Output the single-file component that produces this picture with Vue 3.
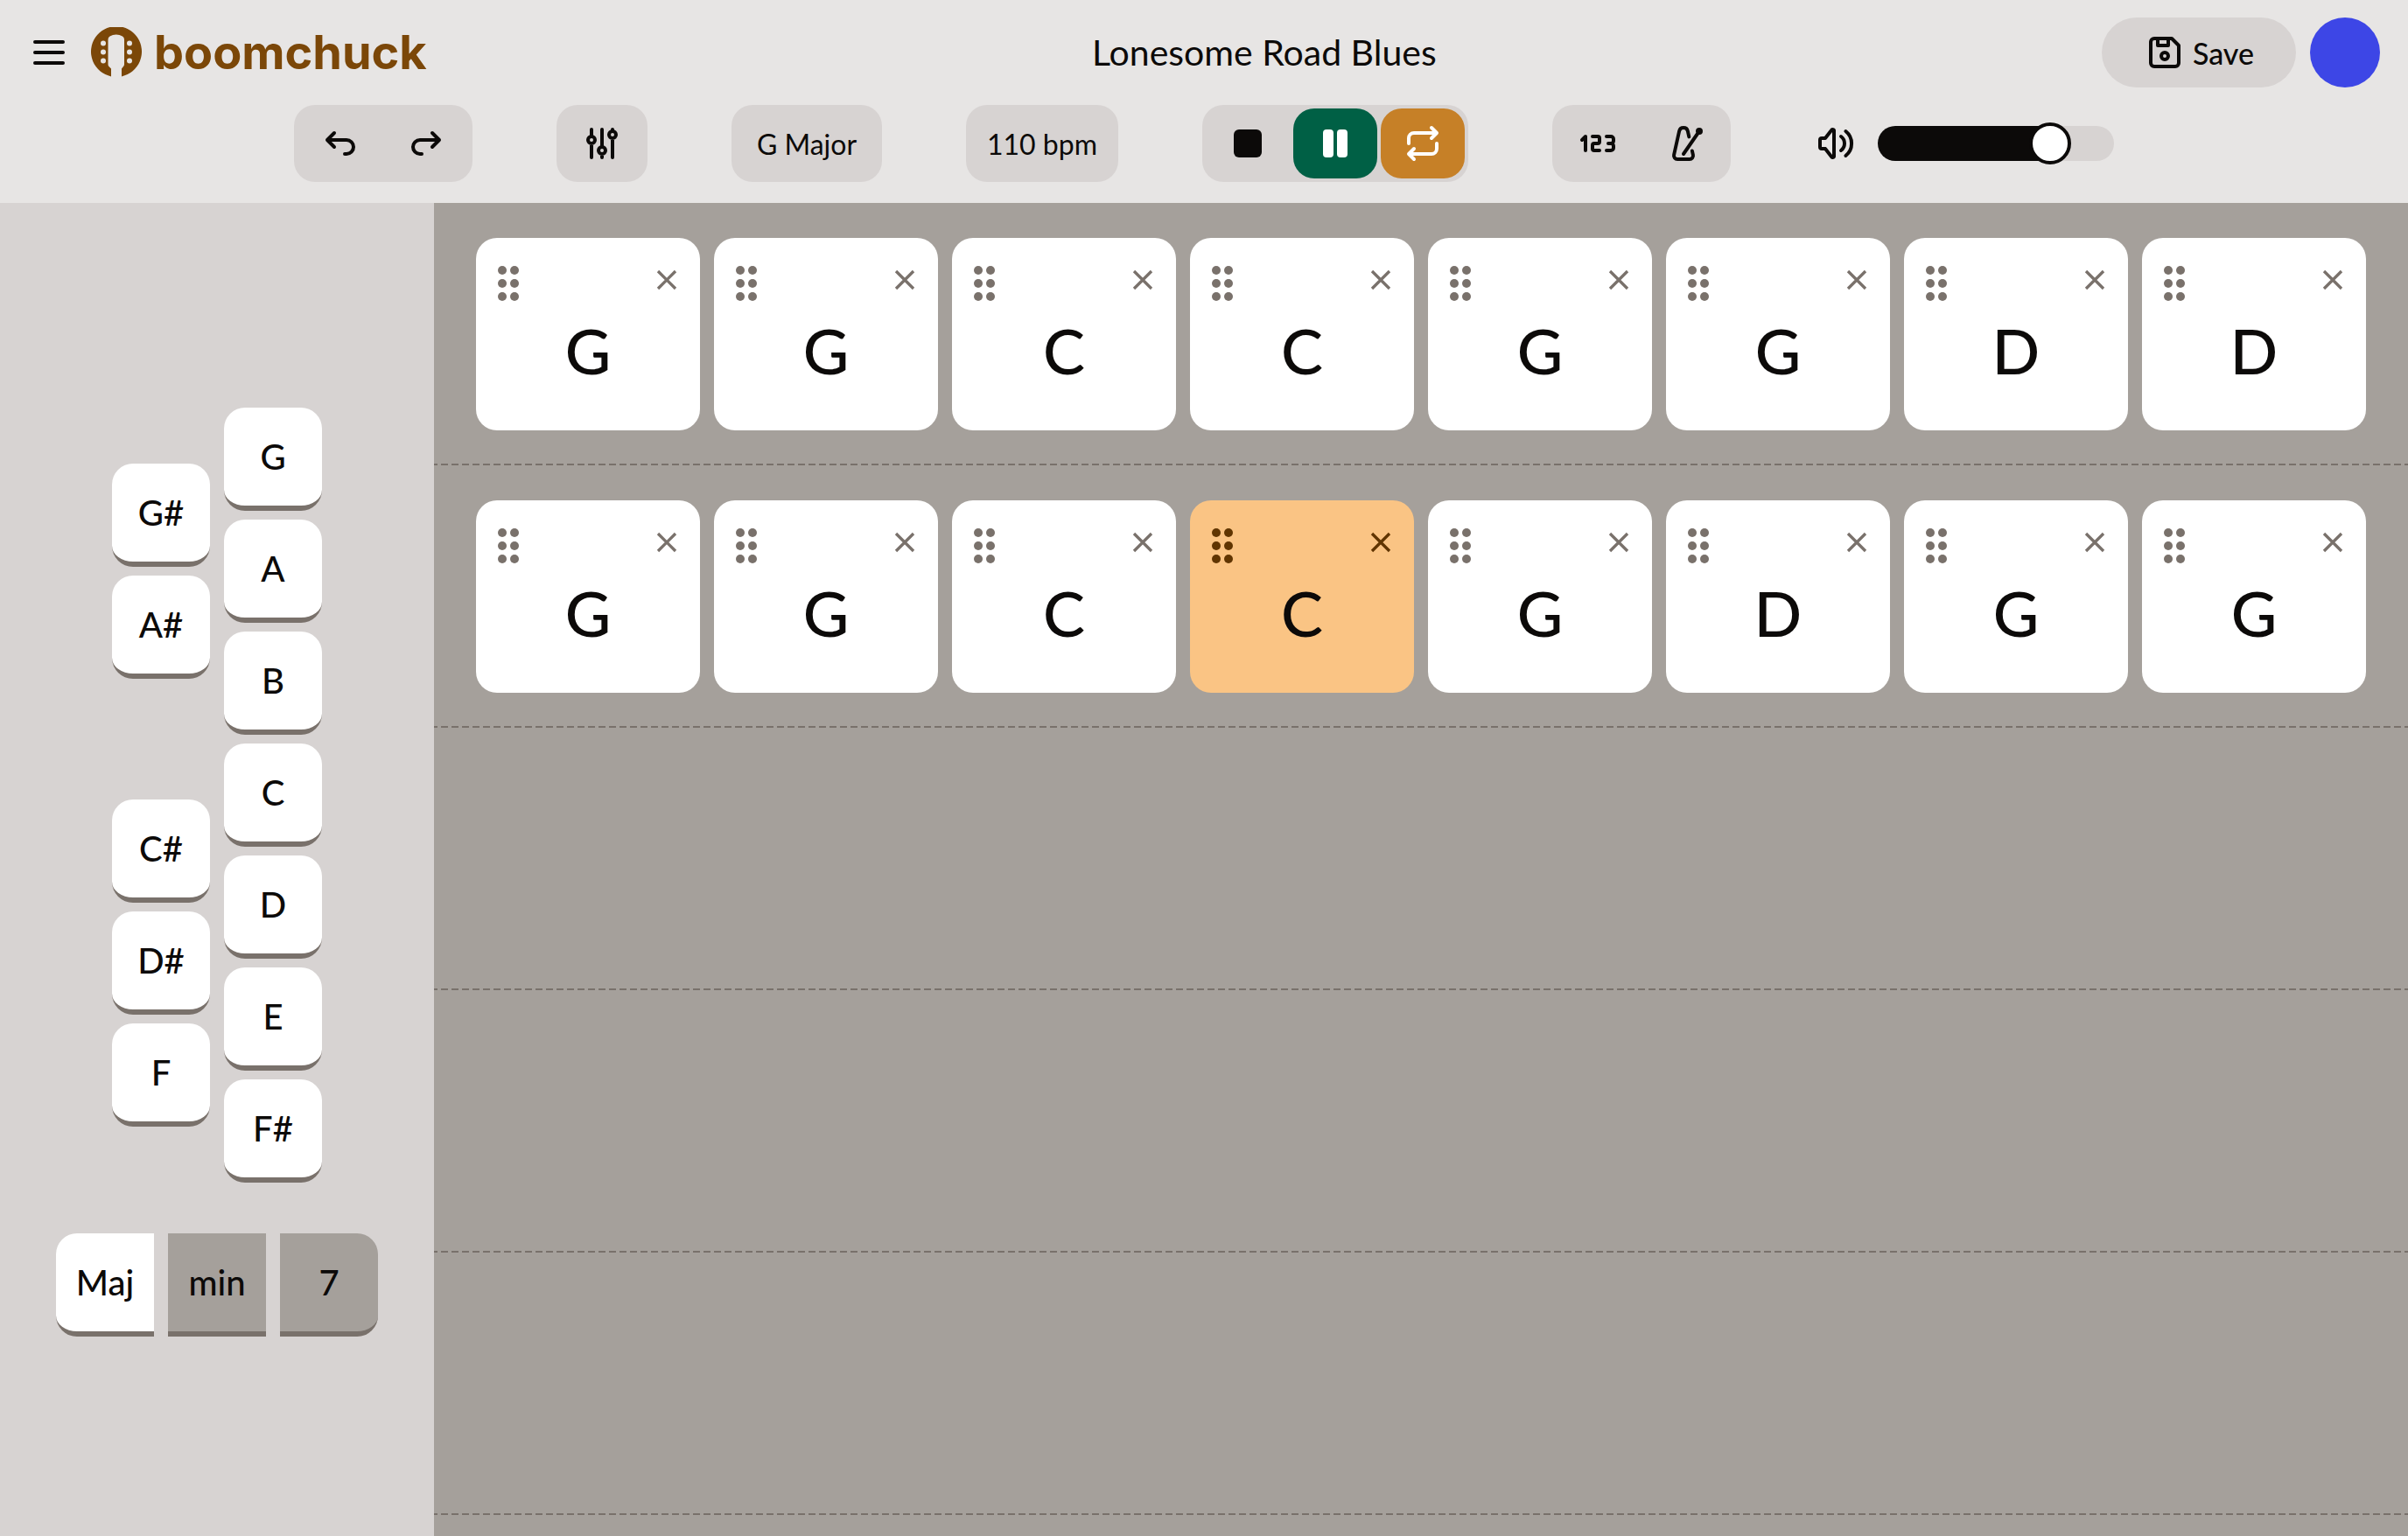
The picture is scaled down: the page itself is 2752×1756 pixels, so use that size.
<script setup>
import { computed, ref } from 'vue'

const rows = ref([
  ['G', 'G', 'C', 'C', 'G', 'G', 'D', 'D'],
  ['G', 'G', 'C', 'C', 'G', 'D', 'G', 'G'],
  [],
  [],
  [],
  [],
])
const active = { row: 1, col: 3 }

// start is the half-key step at which a key begins
const keys = [
  { note: 'G', side: 2, start: 1 },
  { note: 'G#', side: 1, start: 2 },
  { note: 'A', side: 2, start: 3 },
  { note: 'A#', side: 1, start: 4 },
  { note: 'B', side: 2, start: 5 },
  { note: 'C', side: 2, start: 7 },
  { note: 'C#', side: 1, start: 8 },
  { note: 'D', side: 2, start: 9 },
  { note: 'D#', side: 1, start: 10 },
  { note: 'E', side: 2, start: 11 },
  { note: 'F', side: 1, start: 12 },
  { note: 'F#', side: 2, start: 13 },
]

const qualities = ['Maj', 'min', '7']
const quality = ref('Maj')
const volume = ref(78)
const fill = computed(() => `calc(24px + (100% - 48px) * ${volume.value / 100})`)
</script>

<template>
  <div class="app">
    <header class="header">
      <div class="title-bar">
        <div class="brand">
          <button class="plain" type="button" aria-label="Menu">
            <svg class="icon" viewBox="0 0 24 24"><path d="M4 6h16M4 12h16M4 18h16" /></svg>
          </button>
          <a class="logo" href="#">
            <svg class="logo-mark" viewBox="0 0 58 58" aria-hidden="true">
              <path fill="#7b4708" d="M23 56.4V47.500L20.500 45Q19.500 44 19.500 42.500V14Q19.500 11.500 21.500 10.500L25 9Q28.800 7.800 32.500 9L36 10.500Q38 11.500 38 14V42.500Q38 44 37 45L35 47.500V56.400A29 29 0 1 0 23 56.400Z" />
              <g fill="#e7e5e4">
                <circle cx="14" cy="18.500" r="3" /><circle cx="14" cy="28.500" r="3" /><circle cx="14" cy="38.500" r="3" />
                <circle cx="44" cy="18.500" r="3" /><circle cx="44" cy="28.500" r="3" /><circle cx="44" cy="38.500" r="3" />
              </g>
            </svg>
            <span class="logo-name">boomchuck</span>
          </a>
        </div>
        <h1 class="song">Lonesome Road Blues</h1>
        <div class="account">
          <button class="save" type="button">
            <svg class="icon" viewBox="0 0 24 24"><path d="M6 4h10l4 4v10a2 2 0 0 1-2 2H6a2 2 0 0 1-2-2V6a2 2 0 0 1 2-2M10 14a2 2 0 1 0 4 0a2 2 0 1 0-4 0M14 4v4H8V4" /></svg>
            Save
          </button>
          <button class="avatar" type="button" aria-label="Account"></button>
        </div>
      </div>

      <div class="toolbar">
        <div class="group">
          <button class="tool" type="button" aria-label="Undo">
            <svg class="icon" viewBox="0 0 24 24"><path d="M9 14l-4-4l4-4M5 10h11a4 4 0 1 1 0 8h-1" /></svg>
          </button>
          <button class="tool" type="button" aria-label="Redo">
            <svg class="icon" viewBox="0 0 24 24"><path d="M15 14l4-4l-4-4M19 10H8a4 4 0 1 0 0 8h1" /></svg>
          </button>
        </div>
        <div class="group">
          <button class="tool" type="button" aria-label="Mixer">
            <svg class="icon" viewBox="0 0 24 24"><path d="M4 10a2 2 0 1 0 4 0a2 2 0 0 0-4 0M6 4v4M6 12v8M10 16a2 2 0 1 0 4 0a2 2 0 0 0-4 0M12 4v10M12 18v2M16 7a2 2 0 1 0 4 0a2 2 0 0 0-4 0M18 4v1M18 9v11" /></svg>
          </button>
        </div>
        <button class="group label" type="button">G Major</button>
        <button class="group label" type="button">110 bpm</button>
        <div class="group">
          <button class="tool" type="button" aria-label="Stop">
            <svg class="icon solid" viewBox="0 0 24 24"><rect x="4" y="4" width="16" height="16" rx="3" /></svg>
          </button>
          <button class="tool pause" type="button" aria-label="Pause">
            <svg class="icon solid" viewBox="0 0 24 24"><rect x="5" y="4" width="6" height="16" rx="2" /><rect x="13" y="4" width="6" height="16" rx="2" /></svg>
          </button>
          <button class="tool loop" type="button" aria-label="Loop">
            <svg class="icon" viewBox="0 0 24 24"><path d="M4 12V9a3 3 0 0 1 3-3h13m-3-3l3 3l-3 3M20 12v3a3 3 0 0 1-3 3H4m3 3l-3-3l3-3" /></svg>
          </button>
        </div>
        <div class="group">
          <button class="tool" type="button" aria-label="Count in">
            <svg class="icon" viewBox="0 0 24 24"><path d="M3 10l2-2v8M9 8h3a1 1 0 0 1 1 1v2a1 1 0 0 1-1 1h-2a1 1 0 0 0-1 1v2a1 1 0 0 0 1 1h3M17 8h2.500a1.500 1.500 0 0 1 1.500 1.500v1a1.500 1.500 0 0 1-1.500 1.500H18h1.500a1.500 1.500 0 0 1 1.500 1.500v1a1.500 1.500 0 0 1-1.500 1.500H17" /></svg>
          </button>
          <button class="tool" type="button" aria-label="Metronome">
            <svg class="icon" viewBox="0 0 24 24"><path d="M14.153 8.188l-.72-3.236a2.493 2.493 0 0 0-4.867 0L5.541 18.566A2 2 0 0 0 7.493 21h7.014a2 2 0 0 0 1.952-2.434l-.524-2.357M11 18l9-13M19 5a1 1 0 1 0 2 0a1 1 0 0 0-2 0" /></svg>
          </button>
        </div>
        <label class="volume">
          <svg class="icon" viewBox="0 0 24 24" role="img" aria-label="Volume"><path d="M15 8a5 5 0 0 1 0 8M17.700 5a9 9 0 0 1 0 14M6 15H4a1 1 0 0 1-1-1v-4a1 1 0 0 1 1-1h2l3.500-4.500a.8.8 0 0 1 1.500.5v14a.8.8 0 0 1-1.500.5L6 15" /></svg>
          <input v-model.number="volume" class="slider" type="range" min="0" max="100" :style="{ '--fill': fill }" />
        </label>
      </div>
    </header>

    <div class="workspace">
      <aside class="palette">
        <div class="keys">
          <button
            v-for="key in keys"
            :key="key.note"
            class="key"
            type="button"
            :style="{ gridColumn: key.side, gridRow: `${key.start} / span 2` }"
          >{{ key.note }}</button>
        </div>
        <div class="qualities">
          <button
            v-for="name in qualities"
            :key="name"
            class="key quality"
            :class="{ selected: name === quality }"
            type="button"
            @click="quality = name"
          >{{ name }}</button>
        </div>
      </aside>

      <main class="sheet">
        <section v-for="(row, r) in rows" :key="r" class="line">
          <article
            v-for="(chord, c) in row"
            :key="c"
            class="chord"
            :class="{ playing: r === active.row && c === active.col }"
          >
            <div class="chord-tools">
              <svg class="grip" viewBox="0 0 24 40" aria-hidden="true">
                <circle cx="5" cy="5" r="5" /><circle cx="5" cy="20" r="5" /><circle cx="5" cy="35" r="5" />
                <circle cx="19" cy="5" r="5" /><circle cx="19" cy="20" r="5" /><circle cx="19" cy="35" r="5" />
              </svg>
              <button class="plain" type="button" aria-label="Remove chord">
                <svg class="icon small" viewBox="0 0 24 24"><path d="M18 6L6 18M6 6l12 12" /></svg>
              </button>
            </div>
            <span class="chord-name">{{ chord }}</span>
          </article>
        </section>
      </main>
    </div>
  </div>
</template>

<style>
body {
  margin: 0;
}
</style>

<style scoped>
.app {
  display: flex;
  flex-direction: column;
  height: 100vh;
  overflow: hidden;
  color: #0c0a09;
  background: #e7e5e4;
  font-family: Lato, "Liberation Sans", sans-serif;
}

.app *,
.app {
  box-sizing: border-box;
}

button {
  margin: 0;
  padding: 0;
  border: 0;
  color: inherit;
  background: none;
  font: inherit;
  cursor: pointer;
}

.plain {
  display: flex;
}

.icon {
  display: block;
  flex: none;
  width: 48px;
  height: 48px;
  fill: none;
  stroke: currentColor;
  stroke-width: 2;
  stroke-linecap: round;
  stroke-linejoin: round;
}

.icon.solid {
  fill: currentColor;
  stroke: none;
}

.icon.small {
  width: 40px;
  height: 40px;
  stroke-linecap: butt;
}

.header {
  flex: none;
  padding-bottom: 24px;
}

.title-bar {
  display: flex;
  align-items: center;
  justify-content: space-between;
  height: 120px;
  padding: 0 32px;
}

.brand {
  display: flex;
  align-items: center;
  gap: 24px;
}

.logo {
  display: flex;
  align-items: center;
  gap: 14px;
  color: #7b4708;
  text-decoration: none;
}

.logo-mark {
  width: 58px;
  height: 58px;
}

.logo-name {
  font-family: Inter, sans-serif;
  font-size: 54px;
  font-weight: 700;
  line-height: 56px;
}

.song {
  margin: 0;
  font-size: 41px;
  font-weight: 400;
  line-height: 56px;
}

.account {
  display: flex;
  gap: 16px;
}

.save {
  display: flex;
  align-items: center;
  gap: 8px;
  height: 80px;
  padding: 0 48px;
  border-radius: 40px;
  background: #d7d3d2;
  font-size: 34px;
  font-weight: 500;
}

.avatar {
  width: 80px;
  height: 80px;
  border-radius: 50%;
  background: #3d46e6;
}

.toolbar {
  display: flex;
  justify-content: center;
  gap: 96px;
}

.group {
  display: flex;
  align-items: center;
  justify-content: center;
  gap: 4px;
  height: 88px;
  padding: 4px;
  border-radius: 24px;
  background: #d7d3d2;
}

.label {
  min-width: 172px;
  padding: 0 24px;
  font-size: 32px;
}

.tool {
  display: flex;
  align-items: center;
  justify-content: center;
  width: 96px;
  height: 80px;
  border-radius: 24px;
}

.pause {
  color: #fff;
  background: #006045;
}

.loop {
  color: #fff;
  background: #c68027;
}

.volume {
  display: flex;
  align-items: center;
  gap: 24px;
}

.slider {
  appearance: none;
  width: 270px;
  height: 40px;
  margin: 0;
  border-radius: 20px;
  background: linear-gradient(to right, #0c0a09 var(--fill), #d7d3d2 var(--fill));
}

.slider::-webkit-slider-thumb {
  appearance: none;
  width: 48px;
  height: 48px;
  border: 4px solid #0c0a09;
  border-radius: 50%;
  background: #fff;
}

.workspace {
  display: flex;
  flex: 1;
  min-height: 0;
}

.palette {
  display: flex;
  flex: none;
  flex-direction: column;
  align-items: center;
  justify-content: center;
  gap: 48px;
  width: 496px;
  padding-top: 6px;
  background: #d7d3d2;
}

.keys {
  display: grid;
  grid-template-columns: 112px 112px;
  grid-auto-rows: 64px;
  column-gap: 16px;
}

.key {
  width: 112px;
  height: 118px;
  border-bottom: 6px solid #79716b;
  border-radius: 24px;
  background: #fff;
  font-size: 40px;
  font-weight: 500;
}

.qualities {
  display: flex;
  gap: 16px;
}

.quality {
  border-radius: 0;
  background: #a5a09b;
}

.quality.selected {
  background: #fff;
}

.quality:first-child {
  border-radius: 24px 0 0 24px;
}

.quality:last-child {
  border-radius: 0 24px 24px 0;
}

.sheet {
  flex: 1;
  min-width: 0;
  overflow: hidden;
  background: #a5a09b;
}

.line {
  display: grid;
  grid-template-columns: repeat(8, 1fr);
  gap: 16px;
  height: 300px;
  padding: 40px 48px;
  background: repeating-linear-gradient(to right, #79716b 0 4px, transparent 4px 8px, #79716b 8px 12px) bottom / 100% 2px no-repeat;
}

.chord {
  display: flex;
  flex-direction: column;
  height: 220px;
  padding-top: 28px;
  border-radius: 24px;
  background: #fff;
}

.chord-tools {
  display: flex;
  justify-content: space-between;
  padding: 0 18px 0 25px;
  color: #79716b;
}

.grip {
  width: 24px;
  height: 40px;
  margin-top: 4px;
  fill: currentColor;
}

.chord-name {
  align-self: center;
  margin-top: 12px;
  font-size: 72px;
  font-weight: 500;
  line-height: 88px;
}

.playing {
  background: #fac484;
}

.playing .chord-tools {
  color: #603500;
}
</style>
